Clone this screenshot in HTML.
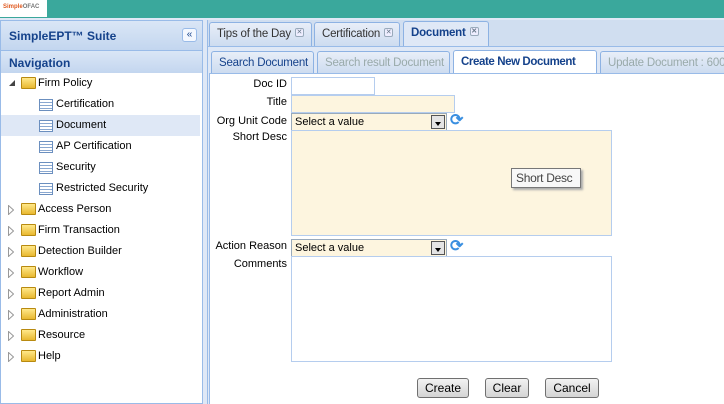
<!DOCTYPE html><html><head><style>
*{box-sizing:border-box;margin:0;padding:0}
body{width:724px;height:404px;overflow:hidden;background:#dfe8f6;font-family:"Liberation Sans",Tahoma,sans-serif;font-size:11px;position:relative}
.a{position:absolute}
.hdr{background:linear-gradient(#dae6f6,#c3d6ef);border:1px solid #99bbe8;font-weight:bold;color:#15428b;font-size:12px;padding:8px 0 0 8px}
.tree div{position:absolute;left:0;width:199px;height:21px;line-height:21px;font-size:11px;color:#000;white-space:nowrap}
.fold{position:absolute;left:20px;top:4px;width:15px;height:12px;background:linear-gradient(#ffe88a,#e8b830);border:1px solid #b88a10;border-radius:1px}
.doc{position:absolute;left:38px;top:5px;width:14px;height:12px;border:1px solid #6b8fbf;background:repeating-linear-gradient(#fff 0 2px,#8aa8d0 2px 3px);}
.tri{position:absolute;left:7px;top:6px}
.tab{position:absolute;border:1px solid #8db2e3;border-bottom:none;background:linear-gradient(#e8eef8,#cddcf0);color:#15428b;font-size:11.5px;border-radius:3px 3px 0 0;padding:5px 0 0 7px;white-space:nowrap;overflow:hidden;letter-spacing:-0.2px}
.x{display:inline-block;width:9px;height:9px;border:1px solid #9ab;font-size:7px;line-height:7px;text-align:center;color:#678;vertical-align:top;margin-left:4px;border-radius:2px;background:#eef;letter-spacing:0}
.lbl{position:absolute;right:437px;font-size:11px;color:#000;white-space:nowrap}
.in{position:absolute;border:1px solid #b5cdee;background:#fdf5df}
.btn{position:absolute;top:378px;height:20px;border:1px solid #707070;border-radius:3px;background:linear-gradient(#f2f2f2,#d4d4d4);font-size:12px;text-align:center;line-height:18px}
.sel{position:absolute;border:1px solid #9ab;background:#fdf5df;font-size:11px;padding:2px 3px;white-space:nowrap}
.dd{position:absolute;right:1px;top:1px;width:14px;height:14px;border:1px solid #555;background:#e4e4e4}
.dd:after{content:"";position:absolute;left:3px;top:6px;border-top:4px solid #000;border-left:3px solid transparent;border-right:3px solid transparent}
</style></head><body>
<div class="a" style="left:0;top:0;width:724px;height:18px;background:#3aa89c"></div>
<div class="a" style="left:0;top:0;width:47px;height:17px;background:#fff;font-size:6px;font-weight:bold;color:#e05a20;padding:4px 0 0 3px;white-space:nowrap">Simple<span style="color:#777">OFAC</span></div>
<div class="a hdr" style="left:0;top:20px;width:203px;height:31px">SimpleEPT™ Suite</div>
<div class="a" style="left:182px;top:28px;width:15px;height:14px;border:1px solid #99bbe8;background:#f4f8ff;border-radius:3px;font-size:10px;line-height:11px;text-align:center;color:#15428b">«</div>
<div class="a hdr" style="left:0;top:50px;width:203px;height:24px;padding-top:5px">Navigation</div>
<div class="a" style="left:0;top:73px;width:203px;height:331px;background:#fff;border:1px solid #99bbe8;border-top:none"></div>
<div class="a tree" style="left:1px;top:73px;width:201px;height:330px">
<div style="top:0"><svg class="tri" width="8" height="8"><path d="M7 1V7H1Z" fill="#444"/></svg><span class="fold"></span><span style="margin-left:37px">Firm Policy</span></div>
<div style="top:21px"><span class="doc"></span><span style="margin-left:55px">Certification</span></div>
<div style="top:42px;background:#dfe8f6"><span class="doc"></span><span style="margin-left:55px">Document</span></div>
<div style="top:63px"><span class="doc"></span><span style="margin-left:55px">AP Certification</span></div>
<div style="top:84px"><span class="doc"></span><span style="margin-left:55px">Security</span></div>
<div style="top:105px"><span class="doc"></span><span style="margin-left:55px">Restricted Security</span></div>
<div style="top:126px"><svg class="tri" width="6" height="10"><path d="M0.5 0.5L5.5 5L0.5 9.5Z" fill="#fff" stroke="#999"/></svg><span class="fold"></span><span style="margin-left:37px">Access Person</span></div>
<div style="top:147px"><svg class="tri" width="6" height="10"><path d="M0.5 0.5L5.5 5L0.5 9.5Z" fill="#fff" stroke="#999"/></svg><span class="fold"></span><span style="margin-left:37px">Firm Transaction</span></div>
<div style="top:168px"><svg class="tri" width="6" height="10"><path d="M0.5 0.5L5.5 5L0.5 9.5Z" fill="#fff" stroke="#999"/></svg><span class="fold"></span><span style="margin-left:37px">Detection Builder</span></div>
<div style="top:189px"><svg class="tri" width="6" height="10"><path d="M0.5 0.5L5.5 5L0.5 9.5Z" fill="#fff" stroke="#999"/></svg><span class="fold"></span><span style="margin-left:37px">Workflow</span></div>
<div style="top:210px"><svg class="tri" width="6" height="10"><path d="M0.5 0.5L5.5 5L0.5 9.5Z" fill="#fff" stroke="#999"/></svg><span class="fold"></span><span style="margin-left:37px">Report Admin</span></div>
<div style="top:231px"><svg class="tri" width="6" height="10"><path d="M0.5 0.5L5.5 5L0.5 9.5Z" fill="#fff" stroke="#999"/></svg><span class="fold"></span><span style="margin-left:37px">Administration</span></div>
<div style="top:252px"><svg class="tri" width="6" height="10"><path d="M0.5 0.5L5.5 5L0.5 9.5Z" fill="#fff" stroke="#999"/></svg><span class="fold"></span><span style="margin-left:37px">Resource</span></div>
<div style="top:273px"><svg class="tri" width="6" height="10"><path d="M0.5 0.5L5.5 5L0.5 9.5Z" fill="#fff" stroke="#999"/></svg><span class="fold"></span><span style="margin-left:37px">Help</span></div>
</div>
<div class="a" style="left:207px;top:20px;width:517px;height:26px;background:#d0def0;border-left:1px solid #99bbe8"></div>
<div class="tab" style="left:209px;top:22px;width:103px;height:24px;color:#333">Tips of the Day<span class="x">✕</span></div>
<div class="tab" style="left:314px;top:22px;width:86px;height:24px;color:#333">Certification<span class="x">✕</span></div>
<div class="tab" style="left:403px;top:21px;width:86px;height:26px;background:#dfe8f6;font-weight:bold;color:#15428b">Document<span class="x">✕</span></div>
<div class="a" style="left:207px;top:46px;width:517px;height:358px;background:#dfe8f6;border:1px solid #99bbe8;border-right:none;border-bottom:none"></div>
<div class="tab" style="left:211px;top:51px;width:103px;height:22px;color:#15428b">Search Document</div>
<div class="tab" style="left:317px;top:51px;width:133px;height:22px;color:#9aa">Search result Document</div>
<div class="tab" style="left:453px;top:50px;width:144px;height:24px;background:#fff;font-weight:bold;color:#15428b;letter-spacing:-0.4px">Create New Document</div>
<div class="tab" style="left:600px;top:51px;width:130px;height:22px;color:#9aa">Update Document : 600</div>
<div class="a" style="left:209px;top:73px;width:515px;height:331px;background:#fff;border-left:1px solid #99bbe8;border-top:1px solid #99bbe8"></div>
<div class="lbl" style="top:78px">Doc ID</div>
<div class="in" style="left:291px;top:77px;width:84px;height:18px;background:#fff"></div>
<div class="lbl" style="top:96px">Title</div>
<div class="in" style="left:291px;top:95px;width:164px;height:18px"></div>
<div class="lbl" style="top:115px">Org Unit Code</div>
<div class="sel" style="left:291px;top:113px;width:156px;height:18px">Select a value<span class="dd"></span></div>
<div class="a" style="left:450px;top:113px;font-size:16px;line-height:16px;color:#3a8fe0;font-weight:bold">⟳</div>
<div class="lbl" style="top:131px">Short Desc</div>
<div class="in" style="left:291px;top:130px;width:321px;height:106px"></div>
<div class="a" style="left:511px;top:168px;width:70px;height:20px;border:1px solid #777;background:#f8f8f8;font-size:12px;color:#444;padding:2px 4px;box-shadow:2px 2px 2px #aaa;white-space:nowrap;letter-spacing:-0.3px">Short Desc</div>
<div class="lbl" style="top:240px">Action Reason</div>
<div class="sel" style="left:291px;top:239px;width:156px;height:18px">Select a value<span class="dd"></span></div>
<div class="a" style="left:450px;top:239px;font-size:16px;line-height:16px;color:#3a8fe0;font-weight:bold">⟳</div>
<div class="lbl" style="top:258px">Comments</div>
<div class="in" style="left:291px;top:256px;width:321px;height:106px;background:#fff"></div>
<div class="btn" style="left:417px;width:52px">Create</div>
<div class="btn" style="left:485px;width:44px">Clear</div>
<div class="btn" style="left:545px;width:54px">Cancel</div>
</body></html>
